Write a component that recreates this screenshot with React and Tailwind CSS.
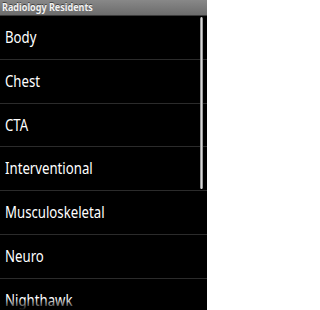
import React from 'react';

const sections = ['Body', 'Chest', 'CTA', 'Interventional', 'Musculoskeletal', 'Neuro', 'Nighthawk', 'Nuclear', 'Pediatrics'];

export default function App() {
  return (
    <div className="w-[207px] h-[310px] overflow-hidden bg-black flex flex-col" style={{ fontFamily: '"Noto Sans", "Open Sans", sans-serif' }}>
      <div className="h-[16px] shrink-0 bg-gradient-to-b from-[#888888] to-[#6c6c6c] border-b border-[#3a3a3a] flex items-center pl-[2px]">
        <span className="block origin-left scale-x-[0.86] whitespace-nowrap text-[10.5px] font-bold leading-none text-[#f2f2f2] [text-shadow:0_-1px_0_rgba(0,0,0,0.5)]">Radiology Residents</span>
      </div>
      <div className="relative flex-1 overflow-hidden">
        <ul>
          {sections.map(s => (
            <li key={s} className="h-[43.75px] flex items-center pl-[5px] border-b border-[#2b2b2b] text-white text-[16.5px]">
              <span className="block origin-left scale-x-[0.8] whitespace-nowrap">{s}</span>
            </li>
          ))}
        </ul>
        {/* scrollbar thumb */}
        <div className="absolute right-[4px] top-[1px] w-[3px] h-[172px] rounded-full bg-gradient-to-r from-[#7a7a7a] via-[#d8d8d8] to-[#7a7a7a]" />
        {/* fading edge */}
        <div className="absolute inset-x-0 bottom-0 h-[11px] bg-gradient-to-t from-black to-transparent" />
      </div>
    </div>
  );
}
